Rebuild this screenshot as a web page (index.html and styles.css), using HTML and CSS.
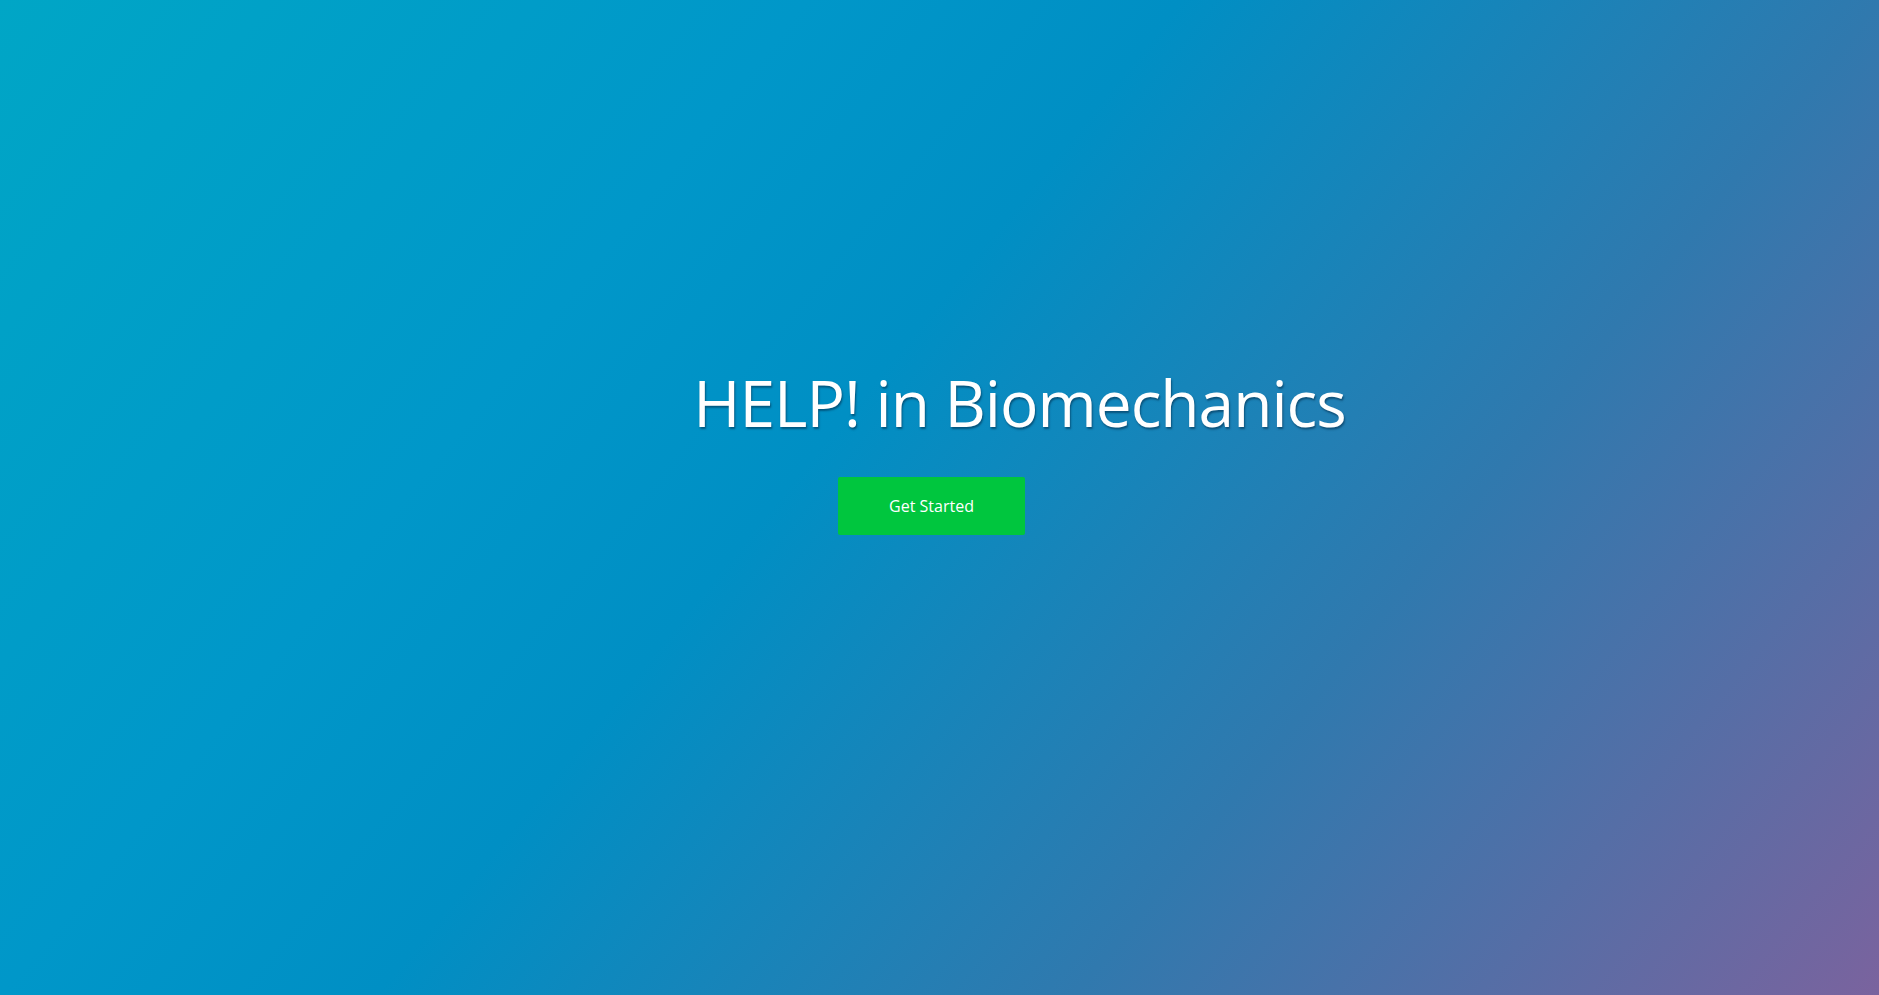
FILE: index.html
```html
<!DOCTYPE html>
<html lang="en">
<head>
<meta charset="utf-8">
<title>HELP! in Biomechanics</title>
<link rel="stylesheet" href="styles.css">
</head>
<body>
<main class="hero">
  <div class="hero-inner">
    <div class="title-row">
      <h1 class="hero-title">HELP! in Biomechanics</h1>
    </div>
    <div class="cta-row">
      <a class="cta-button" href="#">Get Started</a>
    </div>
  </div>
</main>
</body>
</html>
```
FILE: styles.css
```css
html, body {
  margin: 0;
  padding: 0;
  height: 100%;
}

body {
  font-family: "Open Sans", "Noto Sans", sans-serif;
  color: #fff;
  overflow: hidden;
}

.hero {
  height: 100vh;
  background: linear-gradient(129deg, #00a6c6 0%, #0097c9 30%, #008fc4 44%, #3079ae 70%, #7a639e 100%);
  box-sizing: border-box;
  padding-top: 368px;
}

.hero-inner {
  display: flex;
  flex-direction: column;
}

.title-row {
  display: flex;
  justify-content: center;
  padding-left: 160px;
}

.hero-title {
  margin: 0;
  font-size: 64px;
  line-height: 70px;
  font-weight: 400;
  letter-spacing: -1px;
  color: #fff;
  text-shadow: 1px 2px 2px rgba(0, 40, 70, 0.55);
  white-space: nowrap;
}

.cta-row {
  display: flex;
  justify-content: center;
  padding-right: 16px;
  margin-top: 39px;
}

.cta-button {
  display: flex;
  align-items: center;
  justify-content: center;
  width: 187px;
  height: 58px;
  background: #00c63e;
  border-radius: 2px;
  color: #fff;
  text-decoration: none;
  font-size: 16px;
}
```
